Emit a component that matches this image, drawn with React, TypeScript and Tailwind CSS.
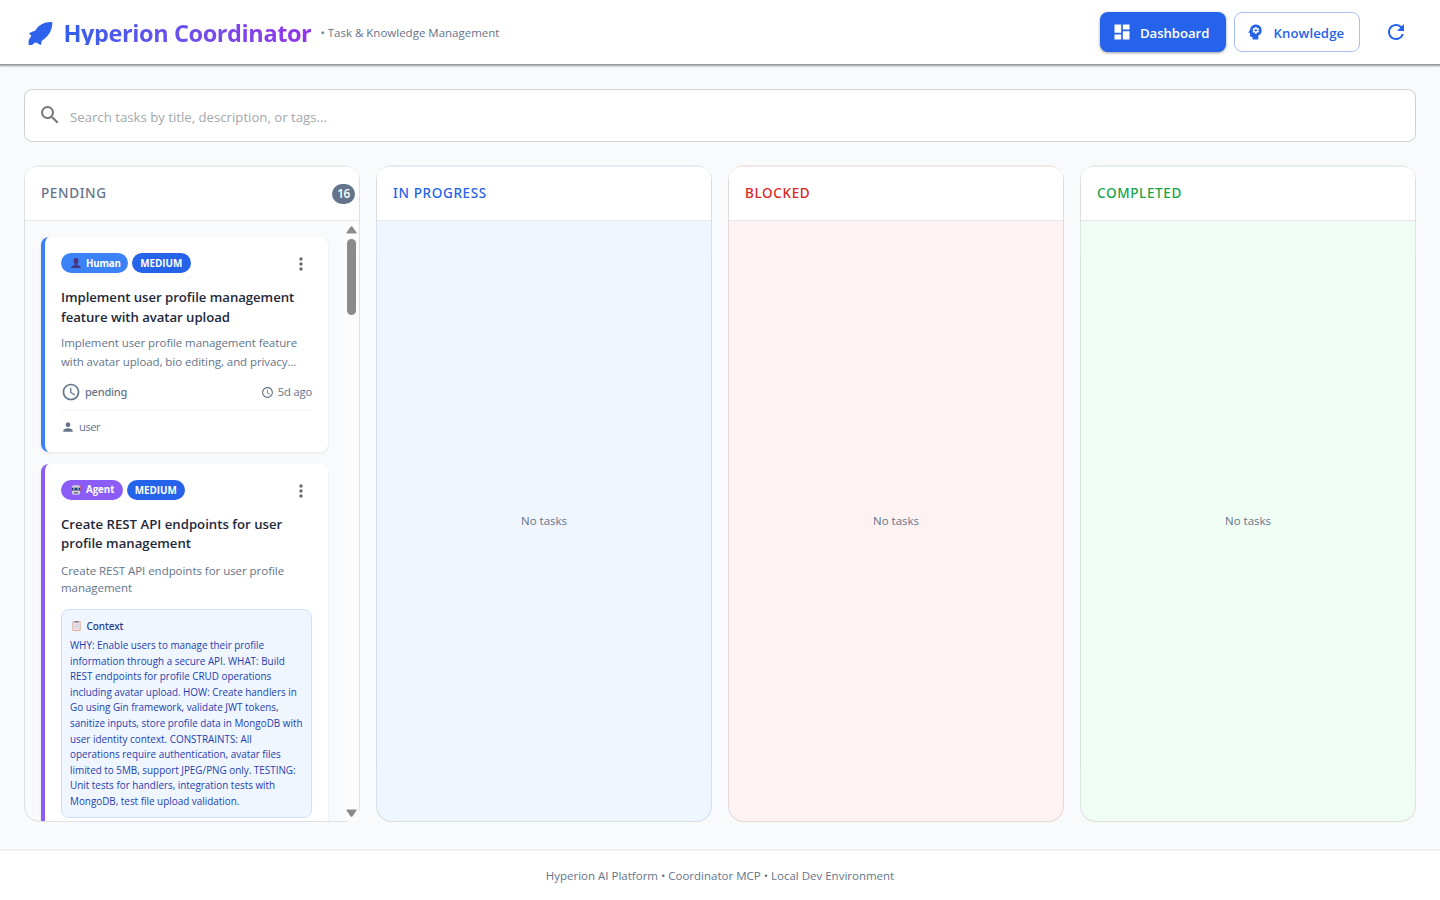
import type { ReactNode } from "react";
import { MdDashboard, MdPsychology, MdRefresh, MdSearch, MdMoreVert, MdAccessTime, MdPerson } from "react-icons/md";

function Rocket() {
  return (
    <svg width="25" height="25" viewBox="0 0 25 25" className="mt-[2px] shrink-0 text-[#2f62ec]" fill="currentColor">
      <path d="M24.300 1C20.600.8 16.900 1.400 13.700 3.200C11 4.800 8.600 7 6.900 9.900C4.800 10 2.600 11.200.800 12.700L3.100 14.100L2.800 15.900C1.500 17.200.7 18.600.6 20.100V24H3.600C4.600 23.900 5.700 22.900 6.500 21.700L9 21.800L10.300 22.800L12.600 24.100C13.300 22.700 13.700 21.400 13.600 19.900C16.900 17.600 19.800 14.700 21.900 11.400C23.600 8.400 24.500 4.800 24.300 1Z" />
    </svg>
  );
}

function PersonEmoji() {
  return (
    <svg width="10" height="10" viewBox="0 0 10 10" className="shrink-0" fill="#4a3580">
      <path d="M5 0C3.300 0 2.400 1.300 2.500 3C2.600 4.500 3.200 5.600 3.900 6.200V7L1.300 8C.6 8.300.2 9 .1 10H9.900C9.800 9 9.400 8.300 8.700 8L6.100 7V6.200C6.800 5.600 7.400 4.500 7.500 3C7.600 1.300 6.700 0 5 0Z" />
    </svg>
  );
}

function RobotEmoji() {
  return (
    <svg width="10" height="10" viewBox="0 0 10 10" className="shrink-0">
      <path d="M0.500 0.500V6M9.500 0.500V6" stroke="#d4607f" strokeWidth="0.900" />
      <rect x="1" y="0.300" width="8" height="9.500" rx="1.800" fill="#d3cedb" />
      <rect x="0.800" y="2.800" width="8.400" height="2.700" rx="0.600" fill="#37355d" />
      <rect x="2" y="3.300" width="2" height="1.500" fill="#56b8ee" />
      <rect x="6" y="3.300" width="2" height="1.500" fill="#56b8ee" />
      <rect x="3" y="7.300" width="4" height="1.100" fill="#544b68" />
    </svg>
  );
}

function ClipboardEmoji() {
  return (
    <svg width="9" height="10" viewBox="0 0 9 10" className="shrink-0">
      <rect x="0.300" y="0.300" width="8.400" height="9.600" rx="0.600" fill="#e0b096" />
      <rect x="1.400" y="1.200" width="6.200" height="7.800" fill="#efe8f2" />
      <rect x="2.500" y="0" width="4" height="1.700" fill="#8a8195" />
      <path d="M2.300 3.700H6.700M2.300 5.300H6.700M2.300 6.900H6.700" stroke="#c3bbcf" strokeWidth="0.600" />
    </svg>
  );
}

function Lines({ lines, className }: { lines: string[]; className: string }) {
  return (
    <div className={className}>
      {lines.map((l) => (
        <div key={l} className="whitespace-nowrap">{l}</div>
      ))}
    </div>
  );
}

function Column({ title, color, body, count, children }: { title: string; color: string; body: string; count?: number; children?: ReactNode }) {
  return (
    <section className={`flex h-[657px] min-w-0 flex-1 flex-col rounded-2xl border border-t-2 border-black/10 border-t-black/5 ${body}`}>
      <header className="flex h-[54px] shrink-0 items-center justify-between rounded-t-xl border-b border-[#e5e7eb] bg-white pr-1 pb-px pl-4">
        <h2 className={`font-['Noto_Sans',sans-serif] text-[13.500px] font-medium tracking-[0.640px] ${color}`}>{title}</h2>
        {count !== undefined && (
          <span className="mt-px flex h-5 w-[23px] items-center justify-center rounded-full bg-[#64748b] text-[11.800px] font-semibold tracking-[-0.400px] text-white">{count}</span>
        )}
      </header>
      {children ?? (
        <div className="flex flex-1 items-center justify-center pb-px text-[11.500px] text-[#64748b]">No tasks</div>
      )}
    </section>
  );
}

function Chips({ kind }: { kind: "Human" | "Agent" }) {
  const human = kind === "Human";
  return (
    <div className="flex h-5 items-center">
      <span className={`flex h-5 items-center gap-[5px] rounded-full pl-[10px] text-[9.700px] font-bold text-white ${human ? "w-[67px] bg-[#3b82f6] tracking-[-0.150px]" : "w-[61.500px] bg-[#8b5cf6] tracking-[-0.020px]"}`}>
        {human ? <PersonEmoji /> : <RobotEmoji />}
        <span className="mt-[2px]">{kind}</span>
      </span>
      <span className="ml-1 flex h-5 w-[58.500px] items-center justify-center rounded-full bg-[#2563eb] pt-px text-[9.900px] font-bold tracking-[-0.060px] text-white">MEDIUM</span>
      <MdMoreVert size={20} className="mt-[2px] mr-[0.600px] ml-auto text-[#6b6b6b]" />
    </div>
  );
}

const context = [
  "WHY: Enable users to manage their profile",
  "information through a secure API. WHAT: Build",
  "REST endpoints for profile CRUD operations",
  "including avatar upload. HOW: Create handlers in",
  "Go using Gin framework, validate JWT tokens,",
  "sanitize inputs, store profile data in MongoDB with",
  "user identity context. CONSTRAINTS: All",
  "operations require authentication, avatar files",
  "limited to 5MB, support JPEG/PNG only. TESTING:",
  "Unit tests for handlers, integration tests with",
  "MongoDB, test file upload validation.",
];

const titleStyle = "text-[13.200px] leading-[19.500px] font-semibold text-[#1e293b]";

export default function App() {
  return (
    <div className="flex h-[900px] flex-col overflow-hidden bg-[#f8fafc] font-['Open_Sans',sans-serif]">
      <header className="relative mb-px flex h-16 shrink-0 items-center bg-white pr-8 pl-7 shadow-[0_1px_2px_1px_rgba(0,0,0,0.420)]">
        <Rocket />
        <h1 className="ml-[10.500px] h-[26px] bg-gradient-to-r from-[#2f5fec] to-[#9333ea] bg-clip-text text-[23.500px] leading-[28px] font-bold tracking-[-0.400px] whitespace-nowrap text-transparent">Hyperion Coordinator</h1>
        <span className="mt-px ml-[9px] text-[11.500px] whitespace-nowrap text-[#64748b]">• Task &amp; Knowledge Management</span>
        <nav className="ml-auto flex items-center">
          <button className="flex h-10 w-[126px] items-center rounded-lg bg-[#2563eb] pl-3 text-[13.200px] font-semibold tracking-[-0.060px] text-white shadow-[0_1px_3px_rgba(0,0,0,0.400)]">
            <MdDashboard size={20} className="mr-2" /><span className="mt-[3px]">Dashboard</span>
          </button>
          <button className="ml-[7.500px] flex h-10 w-[126.500px] items-center rounded-lg border border-[#a8c0f7] pl-[10px] text-[13.200px] font-semibold tracking-[0.080px] text-[#2563eb]">
            <MdPsychology size={20} className="mr-[9px]" /><span className="mt-[3px]">Knowledge</span>
          </button>
          <MdRefresh size={24} className="ml-6 text-[#2563eb]" />
        </nav>
      </header>

      <div className="mx-6 mt-6 flex h-[53px] shrink-0 items-center rounded-lg border border-[#cfd1d4] bg-white pl-[13px]">
        <MdSearch size={24} className="-mt-px text-[#757575]" />
        <span className="mt-[5px] ml-2 text-[13.200px] text-[#a3a7ae]">Search tasks by title, description, or tags...</span>
      </div>

      <main className="mx-6 mt-[23px] flex gap-4">
        <Column title="PENDING" color="text-[#64748b]" body="bg-[#f8fafc]" count={16}>
          <div className="flex h-[600px] overflow-hidden rounded-bl-[15px]">
            <div className="flex flex-1 flex-col gap-3 pt-4 pr-4 pl-4">
              <article className="h-[214.500px] shrink-0 rounded-lg border-l-4 border-[#3b82f6] bg-white p-4 shadow-[0_1px_3px_rgba(0,0,0,0.090)]">
                <Chips kind="Human" />
                <Lines className={`mt-[15px] tracking-[-0.050px] ${titleStyle}`} lines={["Implement user profile management", "feature with avatar upload"]} />
                <Lines className="mt-[6px] text-[11.500px] leading-[19px] tracking-[-0.080px] text-[#64748b]" lines={["Implement user profile management feature", "with avatar upload, bio editing, and privacy..."]} />
                <div className="mt-[11px] flex h-5 items-center text-[11.200px] text-[#64748b]">
                  <MdAccessTime size={20} />
                  <span className="ml-1 font-['Noto_Sans',sans-serif] text-[11px] font-medium tracking-[-0.200px]">pending</span>
                  <MdAccessTime size={13} className="mr-1 ml-auto" />
                  <span className="tracking-[-0.150px]">5d ago</span>
                </div>
                <div className="mt-2 flex h-[33px] items-center border-t border-[#f3f5f8] text-[11.200px] tracking-[-0.450px] text-[#64748b]">
                  <MdPerson size={14} className="mr-1" />user
                </div>
              </article>
              <article className="h-[420px] shrink-0 rounded-lg border-l-4 border-[#8b5cf6] bg-white p-4 shadow-[0_1px_3px_rgba(0,0,0,0.090)]">
                <Chips kind="Agent" />
                <Lines className={`mt-[15px] ${titleStyle}`} lines={["Create REST API endpoints for user", "profile management"]} />
                <Lines className="mt-[8px] text-[11.500px] leading-[17.500px] tracking-[-0.040px] text-[#64748b]" lines={["Create REST API endpoints for user profile", "management"]} />
                <div className="mt-[12.500px] h-[209px] rounded-lg border border-[#cfe2fc] bg-[#eff6ff] px-2 pt-2 text-[#1e40af]">
                  <div className="flex h-4 items-center gap-[5.500px] pl-[2px] font-['Noto_Sans',sans-serif] text-[10px] font-medium tracking-[-0.080px] text-[#1e3a8a]">
                    <ClipboardEmoji />Context
                  </div>
                  <Lines className="mt-1 text-[9.880px] leading-[15.600px]" lines={context} />
                </div>
              </article>
            </div>
            <div className="flex w-[15px] shrink-0 flex-col items-center bg-[#fcfcfc] pt-[5px] pb-1">
              <svg width="11" height="8" viewBox="0 0 11 8" fill="#8b8b8b"><path d="M4.700.6Q5.500-.2 6.300.6L10.500 6.400Q10.900 7.500 9.900 7.500H1.100Q.1 7.500.5 6.400Z" /></svg>
              <div className="mt-[5px] h-[75.500px] w-[9px] rounded-full bg-[#8b8b8b]" />
              <svg width="11" height="8" viewBox="0 0 11 8" fill="#8b8b8b" className="mt-auto"><path d="M4.700 7.400Q5.500 8.200 6.300 7.400L10.500 1.600Q10.900.5 9.900.5H1.100Q.1.5.5 1.600Z" /></svg>
            </div>
          </div>
        </Column>
        <Column title="IN PROGRESS" color="text-[#2563eb]" body="bg-[#eff6ff]" />
        <Column title="BLOCKED" color="text-[#dc2626]" body="bg-[#fef2f2]" />
        <Column title="COMPLETED" color="text-[#16a34a]" body="bg-[#f0fdf4]" />
      </main>

      <footer className="mt-auto flex h-[51px] shrink-0 items-center justify-center border-t-2 border-[#eef0f2] bg-white pt-px text-[11.500px] text-[#64748b]">
        Hyperion AI Platform • Coordinator MCP • Local Dev Environment
      </footer>
    </div>
  );
}
